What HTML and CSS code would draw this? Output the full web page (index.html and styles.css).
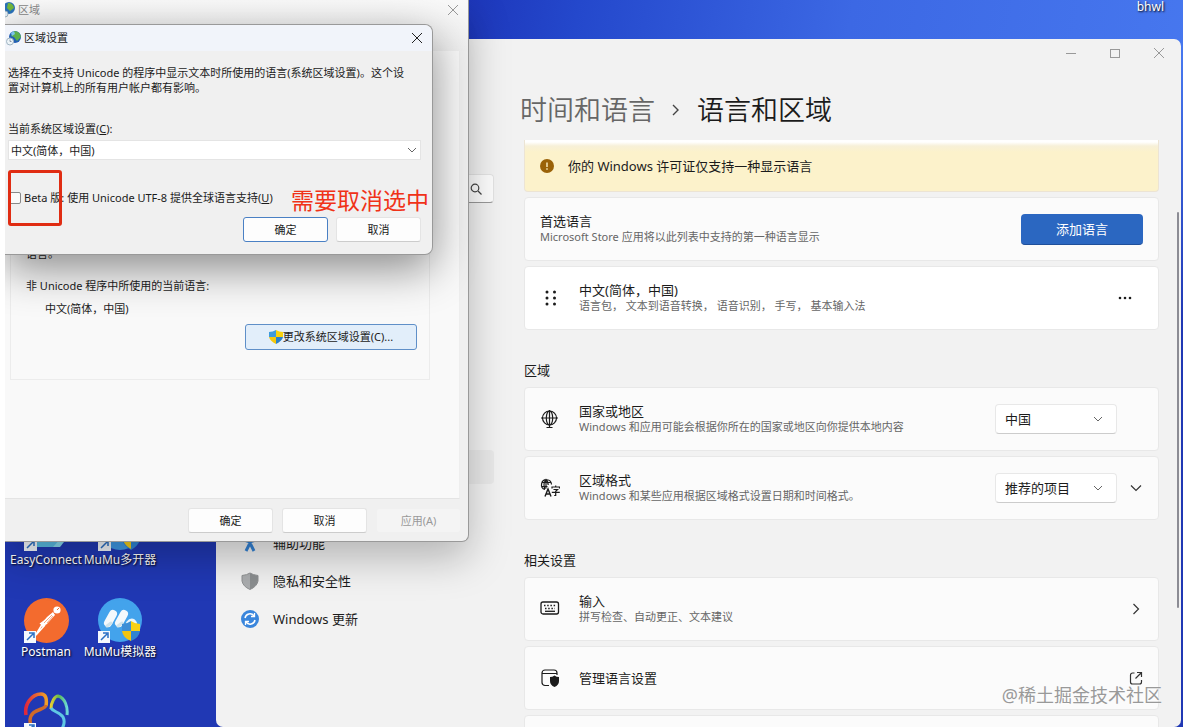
FILE: index.html
```html
<!DOCTYPE html>
<html lang="zh-CN">
<head>
  <meta charset="UTF-8">
  <title>语言和区域</title>
  <meta name="viewport" content="width=device-width, initial-scale=1.0">
  <link rel="stylesheet" href="styles.css">
</head>
<body>
  <div class="desktop">

    <!-- desktop icons -->
    <div class="shortcuts">
      <div class="shortcut">
        <svg width="46" height="46" viewBox="0 0 46 46">
          <path d="M4 8h30l8 18-7 15H8z" fill="#5cbfe6"/>
          <path d="M30 41l10-11 1 6-4 5z" fill="#8adcf0"/>
          <rect x="1" y="32" width="13" height="13" fill="#f4f8fd"/>
          <path d="M4 42l6-6M6 35h5v5" fill="none" stroke="#2a6fc4" stroke-width="1.5"/>
        </svg>
        <span>EasyConnect</span>
      </div>
      <div class="shortcut">
        <svg width="46" height="46" viewBox="0 0 46 46">
          <circle cx="23" cy="22" r="22" fill="#3f9be8"/>
          <path d="M25 25h18v9q-2 6-9 10-7-4-9-10z" fill="#2f86d8"/>
          <path d="M26 34h8v9q-6-3-8-9z" fill="#f7cf1c"/>
          <rect x="1" y="32" width="13" height="13" fill="#f4f8fd"/>
          <path d="M4 42l6-6M6 35h5v5" fill="none" stroke="#2a6fc4" stroke-width="1.5"/>
        </svg>
        <span>MuMu多开器</span>
      </div>
      <div class="shortcut">
        <svg width="46" height="46" viewBox="0 0 46 46">
          <circle cx="23.500" cy="22.500" r="22.500" fill="#f36b2e"/>
          <circle cx="34" cy="12" r="3.600" fill="#fff"/>
          <path d="M34 12l2-2" stroke="#f36b2e" stroke-width="1"/>
          <path d="M30 14l2 3-8 9-5 3-1-3 6-7z" fill="#fff"/>
          <path d="M20 25l-8 13M22 27l-9 10M17 26l14-10" fill="none" stroke="#fff" stroke-width="1.500"/>
          <path d="M21 25l8-8M24 25l6-7" stroke="#f36b2e" stroke-width=".6"/>
          <rect x="1" y="33" width="12" height="12" fill="#f4f8fd"/>
          <path d="M4 42l6-6M6 35h5v5" fill="none" stroke="#2a6fc4" stroke-width="1.5"/>
        </svg>
        <span>Postman</span>
      </div>
      <div class="shortcut">
        <svg width="46" height="46" viewBox="0 0 46 46">
          <circle cx="23" cy="22" r="22" fill="#43a3ec"/>
          <path d="M11 25l5-9M22 25l5-9" stroke="#f4f9fc" stroke-width="8" stroke-linecap="round"/>
          <path d="M31 25q4-5 7 0" fill="none" stroke="#e8f4fb" stroke-width="4" stroke-linecap="round"/>
          <path d="M10 28l4-3M21 28l4-3" stroke="#cfe3ea" stroke-width="3" stroke-linecap="round"/>
          <path d="M25 26q5 0 9-3v10h-9z" fill="#3d8fd6"/>
          <path d="M43 26q-5 0-9-3v10h9z" fill="#f7d117"/>
          <path d="M25 33h9v10q-8-3-9-10z" fill="#f2c40f"/>
          <path d="M43 33h-9v10q8-3 9-10z" fill="#2f83cf"/>
          <rect x="1" y="33" width="12" height="12" fill="#f4f8fd"/>
          <path d="M4 42l6-6M6 35h5v5" fill="none" stroke="#2a6fc4" stroke-width="1.5"/>
        </svg>
        <span>MuMu模拟器</span>
      </div>
      <div class="shortcut">
        <svg width="46" height="46" viewBox="0 0 46 46">
          <defs>
            <linearGradient id="petal-left" x1="0" x2="1">
              <stop offset="0" stop-color="#e0283c"/>
              <stop offset="1" stop-color="#f0a028"/>
            </linearGradient>
            <linearGradient id="petal-right" x1="0" x2="1">
              <stop offset="0" stop-color="#e8cc30"/>
              <stop offset=".5" stop-color="#5cbc50"/>
              <stop offset="1" stop-color="#6cd8dc"/>
            </linearGradient>
          </defs>
          <path d="M3 25C1 14 9 4 18 4c5 0 6 5 5 12" fill="none" stroke="url(#petal-left)" stroke-width="3.500"/>
          <path d="M23 15c-1 6-15 3-16 15q0 6 4 12" fill="none" stroke="#cf6a2a" stroke-width="3.500"/>
          <path d="M28 19C28 12 32 6 35 6c7 2 10 11 9 19" fill="none" stroke="url(#petal-right)" stroke-width="3"/>
          <path d="M28 18c2 4 9 4 12 9 3 6 0 12-6 18" fill="none" stroke="#5fc8e4" stroke-width="3"/>
          <rect x="1" y="33" width="12" height="12" fill="#f4f8fd"/>
          <path d="M4 42l6-6M6 35h5v5" fill="none" stroke="#2a6fc4" stroke-width="1.5"/>
        </svg>
      </div>
    </div>
    <span class="corner-label">bhwl</span>

    <!-- settings window -->
    <div class="settings">
      <aside class="sidebar">
        <label class="search">
          <input type="text" aria-label="查找设置">
          <svg width="12" height="12" viewBox="0 0 12 12" fill="none" stroke="#444" stroke-width="1.2">
            <circle cx="5" cy="5" r="3.800"/><path d="M8 8l3.500 3.500"/>
          </svg>
        </label>
        <nav class="nav">
          <div class="nav-item active"></div>
          <div class="nav-item"></div>
          <a class="nav-item" href="#">
            <svg width="18" height="18" viewBox="0 0 18 18" fill="none" stroke="#3483d6">
              <circle cx="9" cy="3" r="2" fill="#3483d6"/>
              <path d="M3 6l6 2 6-2M9 8v3M8.500 10l-3.500 7M9.500 10l3.500 7" stroke-width="3"/>
            </svg>
            辅助功能
          </a>
          <a class="nav-item" href="#">
            <svg width="18" height="18" viewBox="0 0 18 18">
              <path d="M9 1q3 2 8 2.500V9q-1 5.500-8 8.500z" fill="#8b8e90"/>
              <path d="M9 1Q6 3 1 3.500V9q1 5.500 8 8.500z" fill="#abadaf"/>
              <path d="M9 1q3 2 8 2.500V9q-1 5.500-8 8.500Q2 14.500 1 9V3.500Q6 3 9 1z" fill="none" stroke="#8e9092"/>
            </svg>
            隐私和安全性
          </a>
          <a class="nav-item" href="#">
            <svg width="18" height="18" viewBox="0 0 18 18">
              <circle cx="9" cy="9" r="9" fill="#3a86dc"/>
              <path d="M4 8a5 5 0 0 1 9-2M14 10a5 5 0 0 1-9 2" fill="none" stroke="#fff" stroke-width="1.500"/>
              <path d="M13.500 3v3.500H10M4.500 15v-3.500H8" fill="none" stroke="#fff" stroke-width="1.300"/>
            </svg>
            Windows 更新
          </a>
        </nav>
      </aside>

      <main class="main">
        <div class="window-controls">
          <button aria-label="最小化"><svg width="12" height="12" viewBox="0 0 12 12"><path d="M1 6.500h10"/></svg></button>
          <button aria-label="最大化"><svg width="12" height="12" viewBox="0 0 12 12"><rect x="1.500" y="2.500" width="9" height="8"/></svg></button>
          <button aria-label="关闭"><svg width="12" height="12" viewBox="0 0 12 12"><path d="M1 1l10 10M11 1L1 11"/></svg></button>
        </div>

        <h1 class="breadcrumb">
          <a href="#">时间和语言</a>
          <svg width="8" height="12" viewBox="0 0 8 12" fill="none" stroke="#444" stroke-width="1.400"><path d="M1 1l5 5-5 5"/></svg>
          <span>语言和区域</span>
        </h1>

        <div class="cards">
          <div class="banner">
            <svg width="14" height="14" viewBox="0 0 14 14">
              <circle cx="7" cy="7" r="7" fill="#9a6208"/>
              <path d="M7 3.500v4.500M7 9.200v1.500" stroke="#fdf3c8" stroke-width="1.400"/>
            </svg>
            你的 Windows 许可证仅支持一种显示语言
          </div>

          <div class="card">
            <div class="card-text">
              <div class="title">首选语言</div>
              <div class="sub">Microsoft Store 应用将以此列表中支持的第一种语言显示</div>
            </div>
            <button class="primary">添加语言</button>
          </div>

          <div class="card bright">
            <svg class="card-icon" width="20" height="20" viewBox="0 0 20 20" fill="#1b1b1b">
              <circle cx="7" cy="4" r="1.500"/><circle cx="14.500" cy="4" r="1.500"/>
              <circle cx="7" cy="10" r="1.500"/><circle cx="14.500" cy="10" r="1.500"/>
              <circle cx="7" cy="16" r="1.500"/><circle cx="14.500" cy="16" r="1.500"/>
            </svg>
            <div class="card-text">
              <div class="title">中文(简体，中国)</div>
              <div class="sub">语言包， 文本到语音转换， 语音识别， 手写， 基本输入法</div>
            </div>
            <button class="more" aria-label="更多选项">
              <svg width="14" height="4" viewBox="0 0 14 4" fill="#1b1b1b"><circle cx="2" cy="2" r="1.300"/><circle cx="7" cy="2" r="1.300"/><circle cx="12" cy="2" r="1.300"/></svg>
            </button>
          </div>

          <h2>区域</h2>
          <div class="card">
            <svg class="card-icon" width="20" height="20" viewBox="0 0 20 20" fill="none" stroke="#1b1b1b" stroke-width="1.200">
              <circle cx="9.500" cy="9" r="7"/><ellipse cx="9.500" cy="9" rx="3.200" ry="7"/><path d="M1 9h17M9.500 1v17M6.500 18.500h6"/>
            </svg>
            <div class="card-text">
              <label class="title" for="country">国家或地区</label>
              <div class="sub">Windows 和应用可能会根据你所在的国家或地区向你提供本地内容</div>
            </div>
            <div class="dropdown">
              <select id="country"><option>中国</option></select>
              <svg width="10" height="6" viewBox="0 0 10 6"><path d="M1 1l4 4 4-4"/></svg>
            </div>
            <span class="expander"></span>
          </div>
          <div class="card">
            <svg class="card-icon" width="20" height="20" viewBox="0 0 20 20" fill="none" stroke="#1b1b1b" stroke-width="1.200">
              <path d="M5 11.500A5 5 0 1 1 11.500 6.500M6 1.500v9M1.500 4.500h9M1.500 8.500h6M5 11Q2.500 6 6 1.500 8.500 4 8.200 7"/>
              <path d="M5 18.500L8 11l3 7.500M6 16h4" stroke-width="1.400"/>
              <path d="M12 10.500V9h7.500v1.500M15.700 7.500V9M13.500 11.500h4l-1.800 1.700v4.300h-1.500M11.800 14.300h8" stroke-width="1.200"/>
            </svg>
            <div class="card-text">
              <label class="title" for="format">区域格式</label>
              <div class="sub">Windows 和某些应用根据区域格式设置日期和时间格式。</div>
            </div>
            <div class="dropdown">
              <select id="format"><option>推荐的项目</option></select>
              <svg width="10" height="6" viewBox="0 0 10 6"><path d="M1 1l4 4 4-4"/></svg>
            </div>
            <button class="expander" aria-label="展开"><svg width="12" height="8" viewBox="0 0 12 8"><path d="M1 1.500l5 5 5-5"/></svg></button>
          </div>

          <h2>相关设置</h2>
          <a class="card" href="#">
            <svg class="card-icon" width="20" height="20" viewBox="0 0 20 20" fill="none" stroke="#1b1b1b" stroke-width="1.300">
              <rect x="1" y="3" width="17.500" height="12" rx="2"/>
              <path d="M4 6.500h12M5 9.500h10" stroke-dasharray="1.500 1.700" stroke-width="1.500"/><path d="M5 12.300h10"/>
            </svg>
            <div class="card-text">
              <div class="title">输入</div>
              <div class="sub">拼写检查、自动更正、文本建议</div>
            </div>
            <span class="expander"><svg width="8" height="12" viewBox="0 0 8 12"><path d="M1.500 1l5 5-5 5"/></svg></span>
          </a>
          <a class="card" href="#">
            <svg class="card-icon" width="20" height="20" viewBox="0 0 20 20" fill="none" stroke="#1b1b1b" stroke-width="1.200">
              <path d="M9 17.500H5a3 3 0 0 1-3-3V5a3 3 0 0 1 3-3h9a3 3 0 0 1 3 3v2M2 5.500h15"/>
              <path d="M14.500 7.500q2 1.500 4.500 1.500v4q0 4-4.500 6-4.500-2-4.500-6V9q2.500 0 4.500-1.500z" fill="#1b1b1b" stroke="none"/>
            </svg>
            <div class="card-text">
              <div class="title">管理语言设置</div>
            </div>
            <span class="expander"><svg width="14" height="14" viewBox="0 0 14 14"><path d="M5.500 2H3.500a2 2 0 0 0-2 2v7a2 2 0 0 0 2 2h7a2 2 0 0 0 2-2V9M8 1.500h4.500V6M12.500 1.500L6.500 7.500"/></svg></span>
          </a>
          <div class="card"></div>
        </div>
      </main>
      <div class="scrollbar"></div>
    </div>

    <!-- region window -->
    <div class="region">
      <div class="region-bar">
        <svg width="13" height="16" viewBox="3 0 13 16">
          <circle cx="7" cy="6" r="6" fill="#2b72b8"/><path d="M6 1q5 0 6 5l-4 3-3-3z" fill="#74b83c"/>
          <circle cx="3" cy="12" r="3" fill="#e4edf3" stroke="#9eb4c2"/>
        </svg>
        <span>区域</span>
        <button class="close" aria-label="关闭"><svg width="12" height="12" viewBox="0 0 12 12"><path d="M1 1l10 10M11 1L1 11"/></svg></button>
      </div>
      <div class="tab-page">
        <div class="group">
          <p>语言。</p>
          <p>非 Unicode 程序中所使用的当前语言:</p>
          <p class="indent">中文(简体，中国)</p>
          <button class="elevate">
            <svg width="14" height="14" viewBox="0 0 14 14">
              <path d="M7 0Q4 2 0 2v5h7z" fill="#3e9bdc"/><path d="M7 0q3 2 7 2v5H7z" fill="#f8d20c"/>
              <path d="M0 7h7v7Q1 11 0 7z" fill="#f4c80c"/><path d="M14 7H7v7q6-3 7-7z" fill="#2b80c8"/>
            </svg>更改系统区域设置(C)...
          </button>
        </div>
      </div>
      <div class="region-footer">
        <button class="btn">确定</button>
        <button class="btn">取消</button>
        <button class="btn" disabled>应用(A)</button>
      </div>
    </div>

    <!-- system locale dialog -->
    <div class="dialog">
      <div class="dialog-bar">
        <svg width="16" height="16" viewBox="0 0 16 16">
          <circle cx="9" cy="7" r="6" fill="#235fb4"/><path d="M8 1q6 0 7 6l-4 4-3-4-3-1z" fill="#5cb04a"/><path d="M5 3l3-2 1 3-3 2z" fill="#7cc4e8"/>
          <circle cx="4" cy="11.500" r="3.500" fill="#edf4f8" stroke="#9eb4c2"/><path d="M4 9.500v2h1.500" fill="none" stroke="#789" stroke-width=".8"/>
        </svg>
        <span>区域设置</span>
        <button class="close" aria-label="关闭"><svg width="12" height="12" viewBox="0 0 12 12"><path d="M1 1l10 10M11 1L1 11"/></svg></button>
      </div>
      <div class="dialog-body">
        <p>选择在不支持 Unicode 的程序中显示文本时所使用的语言(系统区域设置)。这个设<br>置对计算机上的所有用户帐户都有影响。</p>
        <label class="field-label" for="locale">当前系统区域设置(<u>C</u>):</label>
        <div class="dropdown locale">
          <select id="locale"><option>中文(简体，中国)</option></select>
          <svg width="10" height="6" viewBox="0 0 10 6"><path d="M1 1l4 4 4-4"/></svg>
        </div>
        <label class="check"><input type="checkbox"><span>Beta 版: 使用 Unicode UTF-8 提供全球语言支持(<u>U</u>)</span></label>
        <div class="dialog-footer">
          <button class="btn default">确定</button>
          <button class="btn">取消</button>
        </div>
      </div>
      <div class="mark-box"></div>
      <div class="mark-text">需要取消选中</div>
    </div>

    <div class="watermark">@稀土掘金技术社区</div>
  </div>
</body>
</html>
```
FILE: styles.css
```css
* {
  box-sizing: border-box;
}
body {
  margin: 0;
  background: #fff;
  color: #1b1b1b;
  font-family: "Noto Sans", "Noto Sans CJK SC", sans-serif;
  font-size: 11px;
  line-height: 16px;
}
button, input, select {
  font: inherit;
  color: inherit;
  margin: 0;
}
button {
  padding: 0;
  border: none;
  background: none;
}
a {
  color: inherit;
  text-decoration: none;
}
p, h1, h2 {
  margin: 0;
  font-weight: normal;
}
svg {
  flex: none;
}
.desktop {
  position: relative;
  margin-left: 5px;
  height: 100vh;
  overflow: hidden;
  background:
    linear-gradient(to bottom, transparent 60px, #2038b4 320px),
    linear-gradient(100deg, #1c34b8 34%, #2448cc 44%, #3c68e4 65%, #4a7cf2 100%);
}

/* desktop icons */
.shortcuts {
  position: absolute;
  left: 4px;
  top: 506px;
  display: grid;
  grid-template-columns: 74px 74px;
  row-gap: 30px;
}
.shortcut {
  display: flex;
  flex-direction: column;
  align-items: center;
  font-size: 12px;
  color: #fff;
  white-space: nowrap;
  text-shadow: 1px 1px 2px #000;
}
.corner-label {
  position: absolute;
  right: 19px;
  top: 0;
  font-size: 12px;
  line-height: 14px;
  color: #fff;
  text-shadow: 1px 1px 2px #000;
}

/* settings window */
.settings {
  position: absolute;
  left: 211px;
  right: 2px;
  top: 39px;
  bottom: 0;
  display: grid;
  grid-template-columns: 278px 1fr;
  column-gap: 26px;
  background: #f2f2f2;
  border-radius: 7px;
  overflow: hidden;
  font-size: 13px;
}
.sidebar {
  padding: 135px 0 0 10px;
}
.search {
  display: flex;
  align-items: center;
  height: 29px;
  padding-right: 11px;
  background: #fdfdfd;
  border: 1px solid #e4e4e4;
  border-bottom-color: #999;
  border-radius: 4px;
}
.search input {
  flex: 1;
  min-width: 0;
  border: none;
  background: none;
}
.nav {
  display: grid;
  row-gap: 4px;
  margin-top: 247px;
}
.nav-item {
  display: flex;
  align-items: center;
  gap: 14px;
  height: 34px;
  padding: 0 15px;
  border-radius: 4px;
}
.nav-item.active {
  background: #e9e9e9;
}
.window-controls {
  display: flex;
  justify-content: flex-end;
}
.window-controls button {
  display: flex;
  align-items: center;
  justify-content: center;
  width: 44px;
  height: 28px;
}
.window-controls svg, .close svg {
  fill: none;
  stroke: #999;
}
.breadcrumb {
  display: flex;
  align-items: center;
  gap: 17px;
  margin-top: 23px;
  font-size: 27px;
  font-weight: 350;
  line-height: 40px;
}
.breadcrumb a {
  color: #666;
}
.cards {
  display: flex;
  flex-direction: column;
  gap: 5px;
  margin: 10px 22px 0 4px;
}
.banner {
  display: flex;
  align-items: center;
  gap: 14px;
  height: 52px;
  padding: 1px 15px 0;
  background: linear-gradient(#fff 2px, #f7f0d8 6px, #fcf2cb 12px);
  border: 1px solid #ece4d4;
  border-top: none;
  border-radius: 0 0 4px 4px;
}
.card {
  display: flex;
  align-items: center;
  height: 64px;
  padding: 0 15px;
  background: #fbfbfb;
  border: 1px solid #e8e8e8;
  border-radius: 4px;
}
.card.bright {
  background: #fff;
}
.card-icon {
  margin-right: 19px;
}
.card-text {
  flex: 1;
}
.title {
  display: block;
}
.sub {
  font-size: 11px;
  color: #666;
}
.cards h2 {
  margin: 25px 0 2px;
  font-size: 13px;
  line-height: 20px;
}
.primary {
  width: 122px;
  height: 31px;
  background: #2b67c1;
  border-bottom: 1px solid #1f4f9a;
  border-radius: 4px;
  color: #fff;
}
.more {
  display: flex;
  align-items: center;
  justify-content: center;
  width: 36px;
  height: 30px;
}
.dropdown {
  position: relative;
  width: 122px;
  height: 30px;
}
.dropdown select {
  appearance: none;
  width: 100%;
  height: 100%;
  padding: 0 9px;
  background: #fff;
  border: 1px solid #e8e8e8;
  border-bottom-color: #ccc;
  border-radius: 4px;
}
.dropdown svg {
  position: absolute;
  right: 14px;
  top: 12px;
  fill: none;
  stroke: #666;
}
.expander {
  display: flex;
  align-items: center;
  justify-content: center;
  width: 14px;
  height: 14px;
  margin-left: 12px;
}
.expander svg {
  fill: none;
  stroke: #333;
  stroke-width: 1.2;
}
.scrollbar {
  position: absolute;
  right: 2px;
  top: 173px;
  width: 2px;
  height: 396px;
  background: #8c8c94;
  border-radius: 1px;
}

/* region window */
.region {
  position: absolute;
  left: 0;
  top: 0;
  width: 464px;
  background: #f0f0f0;
  border-right: 1px solid #999;
  border-bottom: 1px solid #999;
  border-radius: 0 0 7px 0;
  box-shadow: 0 16px 40px rgba(0,0,0,0.26);
}
.region-bar {
  display: flex;
  align-items: center;
  height: 51px;
  padding: 0 9px 32px 0;
  background: linear-gradient(#f9f9f9, #efefef);
  color: #888;
}
.region-bar .close, .dialog-bar .close {
  display: flex;
  margin-left: auto;
}
.tab-page {
  height: 448px;
  margin-right: 8px;
  padding: 0 29px 0 5px;
  background: #f9f9f9;
  border-bottom: 1px solid #e4e4e4;
  border-right: 1px solid #eee;
}
.group {
  display: flex;
  flex-direction: column;
  height: 329px;
  padding: 195px 12px 0 15px;
  border: 1px solid #ececec;
  border-top: none;
}
.group p + p {
  margin-top: 16px;
}
.group p.indent {
  margin: 7px 0 0 19px;
}
.elevate {
  display: flex;
  align-items: center;
  justify-content: center;
  align-self: flex-end;
  width: 172px;
  height: 26px;
  margin-top: 7px;
  background: #e2eefa;
  border: 1px solid #5f8fc8;
  border-radius: 3px;
}
.region-footer {
  display: flex;
  justify-content: flex-end;
  gap: 9px;
  padding: 9px 7px 8px;
}
.btn {
  width: 85px;
  height: 25px;
  background: #fdfdfd;
  border: 1px solid #e4e4e4;
  border-bottom-color: #ccc;
  border-radius: 3px;
}
.btn:disabled {
  background: #f4f4f4;
  border-color: #f0f0f0;
  color: #999;
}
.btn.default {
  border-color: #4a80c4;
}

/* system locale dialog */
.dialog {
  position: absolute;
  left: 0;
  top: 24px;
  width: 428px;
  background: #f0f0f0;
  border: 1px solid #999;
  border-left: none;
  border-radius: 0 8px 8px 0;
  box-shadow: 0 14px 44px rgba(0,0,0,0.44);
}
.dialog-bar {
  display: flex;
  align-items: center;
  gap: 2px;
  height: 26px;
  padding: 0 9px 0 1px;
  background: #f1f4fa;
  border-radius: 0 8px 0 0;
}
.dialog-bar .close svg {
  stroke: #222;
}
.dialog-body {
  display: flex;
  flex-direction: column;
  padding: 14px 11px 12px 3px;
  line-height: 15px;
}
.field-label {
  margin-top: 26px;
}
.dropdown.locale {
  width: auto;
  height: 20px;
  margin-top: 4px;
}
.locale select {
  padding: 0 2px;
  border-color: #e4e4e4;
  border-radius: 0;
}
.locale svg {
  right: 4px;
  top: 7px;
}
.check {
  display: flex;
  align-items: center;
  gap: 3px;
  margin-top: 30px;
}
.check input {
  appearance: none;
  width: 12px;
  height: 12px;
  margin-left: 1px;
  background: #fafafa;
  border: 1px solid #888;
  border-radius: 2px;
}
.dialog-footer {
  display: flex;
  justify-content: flex-end;
  gap: 8px;
  margin-top: 12px;
}

/* red annotation */
.mark-box {
  position: absolute;
  left: 3px;
  top: 145px;
  width: 54px;
  height: 56px;
  border: 3px solid #e02c12;
  border-radius: 3px;
}
.mark-text {
  position: absolute;
  left: 286px;
  top: 160px;
  font-size: 23px;
  line-height: 30px;
  color: #f03218;
  white-space: nowrap;
}
.watermark {
  position: absolute;
  right: 21px;
  bottom: 20px;
  font-size: 18px;
  line-height: 24px;
  color: #999;
  text-shadow: 0 0 2px #fff;
}
```
